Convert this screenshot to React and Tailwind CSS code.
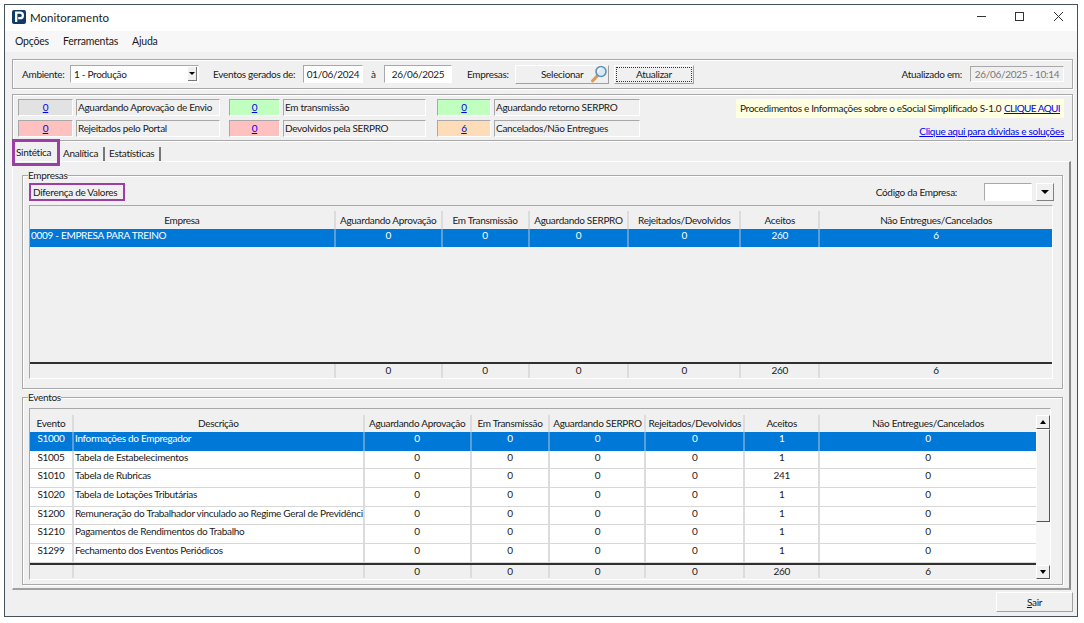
function Inset({ className = "", children }) {
  return (
    <div className={"flex items-center whitespace-nowrap border border-t-[#a8a8a8] border-l-[#a8a8a8] border-r-white border-b-white " + className}>
      {children}
    </div>
  );
}

function Counter({ value, color, boxW, label, labelW, ml }) {
  return (
    <div className={"flex gap-[3px] " + ml}>
      <Inset className={"h-[17px] justify-center " + boxW + " " + color}>
        <a className="text-[#0000ee] underline">{value}</a>
      </Inset>
      <Inset className={"h-[17px] pl-[1px] " + labelW}>{label}</Inset>
    </div>
  );
}

function Lens() {
  return (
    <svg width="18" height="18" viewBox="0 0 18 18" className="block">
      <line x1="8" y1="10" x2="2.5" y2="16" stroke="#d99a5b" strokeWidth="3" strokeLinecap="round" />
      <circle cx="11" cy="6.5" r="5" fill="#d8ecf8" stroke="#5f90b8" strokeWidth="1.6" />
      <path d="M8 6.5a3 3 0 0 1 3-3" fill="none" stroke="#fff" strokeWidth="1.2" />
    </svg>
  );
}

function Row({ cols, cells, selected, h = "h-[18.7px]", footer, leftCols = [] }) {
  return (
    <div
      className={
        "flex shrink-0 " + h + " " +
        (footer
          ? "border-t-2 border-t-[#303030]"
          : selected
            ? "bg-[#0078d7] text-white"
            : "bg-white border-b border-b-[#d8d8d8]")
      }
    >
      {cells.map((c, i) => (
        <div
          key={i}
          className={
            "border-r-2 last:border-r-0 overflow-hidden whitespace-nowrap leading-[12px] " +
            cols[i] + " " +
            (selected ? "border-r-[#5a9fd8] " : "border-r-[#dcdcdc] ") +
            (leftCols.includes(i) ? "text-left pl-[1px]" : "text-center")
          }
        >
          {c}
        </div>
      ))}
    </div>
  );
}

function Header({ cols, cells, h }) {
  return (
    <div className={"flex shrink-0 items-stretch " + h}>
      {cells.map((c, i) => (
        <div key={i} className={"flex items-center justify-center whitespace-nowrap border-r-2 border-r-[#dcdcdc] last:border-r-0 " + cols[i]}>
          {c}
        </div>
      ))}
    </div>
  );
}

function Group({ title, className, children }) {
  return (
    <fieldset className={"border border-[#a8a8a8] shadow-[inset_1px_1px_0_#fff,1px_1px_0_#fff] " + className}>
      <legend className="-ml-[1px] leading-[12px]">{title}</legend>
      {children}
    </fieldset>
  );
}

const empCols = ["w-[306px]", "w-[107px]", "w-[87px]", "w-[100px]", "w-[112px]", "w-[79px]", "w-[232px]"];
const evCols = ["w-[44px]", "w-[291px]", "w-[107px]", "w-[79px]", "w-[96px]", "w-[99px]", "w-[75px]", "w-[216px]"];

const events = [
  ["S1000", "Informações do Empregador", "1"],
  ["S1005", "Tabela de Estabelecimentos", "1"],
  ["S1010", "Tabela de Rubricas", "241"],
  ["S1020", "Tabela de Lotações Tributárias", "1"],
  ["S1200", "Remuneração do Trabalhador vinculado ao Regime Geral de Previdênci", "1"],
  ["S1210", "Pagamentos de Rendimentos do Trabalho", "1"],
  ["S1299", "Fechamento dos Eventos Periódicos", "1"],
];

const input = "bg-white border border-t-[#a8a8a8] border-l-[#a8a8a8] border-r-white border-b-white flex items-center";
const raised = "bg-[#f0f0f0] border border-t-white border-l-white border-r-[#a0a0a0] border-b-[#a0a0a0] flex items-center";
const panel = "border border-[#a8a8a8] shadow-[inset_1px_1px_0_#fff,1px_1px_0_#fff]";

export default function App() {
  return (
    <div className="w-[1084px] h-[623px] bg-white pl-[4px] pt-[4px] overflow-hidden text-[10px] tracking-[-0.3px] leading-[13px] text-[#1a1a1a] font-[Lato,Arial,sans-serif]">
      <div className="w-[1074px] h-[613px] border border-[#44505c] bg-[#f0f0f0] flex flex-col">
        {/* title bar */}
        <div className="h-[26px] bg-white flex items-center pl-[7px] pb-[2px] shrink-0">
          <svg width="14" height="14" viewBox="0 0 14 14">
            <rect width="14" height="14" rx="2" fill="#0f3b66" />
            <path d="M4.2 12V2.6h3.9a2.7 2.7 0 0 1 0 5.6H6.2" fill="none" stroke="#fff" strokeWidth="2.3" />
          </svg>
          <span className="ml-[4px] text-[11.5px] tracking-normal">Monitoramento</span>
          <div className="ml-auto flex items-center">
            <svg width="12" height="12" viewBox="0 0 12 12" className="mr-[26px]"><path d="M1 5.5h9" stroke="#333" /></svg>
            <svg width="12" height="12" viewBox="0 0 12 12" className="mr-[27px]"><rect x="1.5" y="1.5" width="8" height="8" fill="none" stroke="#333" /></svg>
            <svg width="12" height="12" viewBox="0 0 12 12" className="mr-[12px]"><path d="M1 1l9 9M10 1l-9 9" stroke="#333" /></svg>
          </div>
        </div>
        {/* menu */}
        <div className="h-[21px] bg-[#f7f7f7] flex items-center pl-[10px] pb-[1px] gap-[14px] shrink-0 text-[10.5px] tracking-[-0.2px]">
          <span>Opções</span>
          <span>Ferramentas</span>
          <span>Ajuda</span>
        </div>

        <div className="flex-1 pl-[7px] pr-[4px] pt-[7px]">
          {/* filter bar */}
          <div className={"h-[30px] flex items-center pl-[9px] whitespace-nowrap " + panel}>
            <span className="w-[48px]">Ambiente:</span>
            <div className={"w-[129px] h-[18px] pl-[3px] justify-between " + input}>
              <span>1 - Produção</span>
              <span className="w-[9px] h-[14px] mr-[1px] bg-[#f0f0f0] border-r border-b border-[#777] flex items-center justify-center">
                <span className="border-x-[3px] border-x-transparent border-t-[3px] border-t-black" />
              </span>
            </div>
            <span className="ml-[14px] w-[90px]">Eventos gerados de:</span>
            <div className={"w-[60px] h-[18px] justify-center " + input}>01/06/2024</div>
            <span className="ml-[8px] w-[13px]">à</span>
            <div className={"w-[68px] h-[18px] justify-center " + input}>26/06/2025</div>
            <span className="ml-[15px] w-[48px]">Empresas:</span>
            <div className={"w-[94px] h-[19px] " + raised}>
              <span className="ml-[25px]">Selecionar</span>
              <span className="ml-auto"><Lens /></span>
            </div>
            <div className={"ml-[5px] w-[80px] h-[19px] p-[1px] " + raised}>
              <div className="w-full h-full border border-dotted border-[#333] flex items-center justify-center">Atualizar</div>
            </div>
            <span className="ml-auto">Atualizado em:</span>
            <div className="ml-[8px] mr-[8px] w-[94px] h-[16px] border border-t-[#a8a8a8] border-l-[#a8a8a8] border-r-white border-b-white flex items-center justify-center text-[#777]">26/06/2025 - 10:14</div>
          </div>

          {/* status panel */}
          <div className={"mt-[5px] h-[47px] flex pl-[5px] pt-[4px] " + panel}>
            <div className="flex flex-col gap-[4px]">
              <div className="flex">
                <Counter value="0" color="bg-[#e2e2e2]" boxW="w-[55px]" label="Aguardando Aprovação de Envio" labelW="w-[144px]" ml="" />
                <Counter value="0" color="bg-[#c0ffc0]" boxW="w-[51px]" label="Em transmissão" labelW="w-[143px]" ml="ml-[9px]" />
                <Counter value="0" color="bg-[#c0ffc0]" boxW="w-[54px]" label="Aguardando retorno SERPRO" labelW="w-[146px]" ml="ml-[11px]" />
              </div>
              <div className="flex">
                <Counter value="0" color="bg-[#ffc0c0]" boxW="w-[55px]" label="Rejeitados pelo Portal" labelW="w-[144px]" ml="" />
                <Counter value="0" color="bg-[#ffc0c0]" boxW="w-[51px]" label="Devolvidos pela SERPRO" labelW="w-[143px]" ml="ml-[9px]" />
                <Counter value="6" color="bg-[#ffdcb8]" boxW="w-[54px]" label="Cancelados/Não Entregues" labelW="w-[146px]" ml="ml-[11px]" />
              </div>
            </div>
            <div className="ml-auto mr-[8px] flex flex-col items-end whitespace-nowrap">
              <div className="w-[328px] h-[19px] bg-[#ffffe1] flex items-center pl-[4px]">
                <span>Procedimentos e Informações sobre o eSocial Simplificado S-1.0</span>
                <a className="ml-auto mr-[4px] text-[#0000ee] underline tracking-[-0.6px]">CLIQUE AQUI</a>
              </div>
              <a className="mt-[7px] text-[#0000ee] underline">Clique aqui para dúvidas e soluções</a>
            </div>
          </div>

          {/* tabs */}
          <div className="h-[20px] flex items-start">
            <div className="w-[48px] h-[27px] -mt-[2px] border-[3px] border-[#9b3fa6] pl-[1px] pt-[4px] whitespace-nowrap">Sintética</div>
            <span className="ml-[3px] mt-[6px] h-[14px] pr-[5px] border-r-2 border-r-[#777]">Analítica</span>
            <span className="ml-[4px] mt-[6px] h-[14px] pr-[5px] border-r-2 border-r-[#777]">Estatísticas</span>
          </div>

          {/* tab page */}
          <div className="w-[1059px] h-[429px] border-t border-t-white border-r-2 border-r-[#8a8a8a] border-b-2 border-b-[#a0a0a0] border-l border-l-white pl-[9px] pt-[7px]">
            <Group title="Empresas" className="w-[1041px] h-[220px] px-[6px]">
              <div className="flex items-center justify-between h-[18px] mt-[2px]">
                <div className="w-[96px] h-[18px] border-2 border-[#9b3fa6] flex items-center pl-[2px] whitespace-nowrap">Diferença de Valores</div>
                <div className="flex items-center">
                  <span>Código da Empresa:</span>
                  <div className={"ml-[27px] w-[48px] h-[18px] " + input} />
                  <div className="ml-[4px] mr-[2px] w-[18px] h-[18px] bg-[#f0f0f0] border border-t-white border-l-white border-r-[#808080] border-b-[#808080] flex items-center justify-center">
                    <span className="border-x-[4px] border-x-transparent border-t-[4px] border-t-black" />
                  </div>
                </div>
              </div>
              <div className="w-[1024px] h-[174px] mt-[4px] border border-t-[#a8a8a8] border-l-[#a8a8a8] border-r-white border-b-white pt-[5px] flex flex-col">
                <Header h="h-[18px]" cols={empCols} cells={["Empresa", "Aguardando Aprovação", "Em Transmissão", "Aguardando SERPRO", "Rejeitados/Devolvidos", "Aceitos", "Não Entregues/Cancelados"]} />
                <Row cols={empCols} selected h="h-[18px]" leftCols={[0]} cells={["0009 - EMPRESA PARA TREINO", "0", "0", "0", "0", "260", "6"]} />
                <div className="flex-1" />
                <Row cols={empCols} footer h="h-[16px]" cells={["", "0", "0", "0", "0", "260", "6"]} />
              </div>
            </Group>
            <Group title="Eventos" className="w-[1041px] h-[194px] mt-[2px] px-[6px]">
              <div className="w-[1022px] h-[172px] mt-[5px] border border-t-[#a8a8a8] border-l-[#a8a8a8] border-r-white border-b-white pt-[6px] flex">
                <div className="w-[1006px] flex flex-col">
                  <Header h="h-[17px]" cols={evCols} cells={["Evento", "Descrição", "Aguardando Aprovação", "Em Transmissão", "Aguardando SERPRO", "Rejeitados/Devolvidos", "Aceitos", "Não Entregues/Cancelados"]} />
                  {events.map((e, i) => (
                    <Row key={e[0]} cols={evCols} leftCols={[1]} selected={i === 0} cells={[e[0], e[1], "0", "0", "0", "0", e[2], "0"]} />
                  ))}
                  <Row cols={evCols} footer h="h-[15px]" cells={["", "", "0", "0", "0", "0", "260", "6"]} />
                </div>
                <div className="w-[14px] flex flex-col bg-[#f6f6f6]">
                  <div className="h-[14px] bg-[#f0f0f0] border border-r-[#555] border-b-[#555] border-t-white border-l-white flex items-center justify-center">
                    <span className="border-x-[3px] border-x-transparent border-b-[4px] border-b-black" />
                  </div>
                  <div className="h-[93px] bg-[#f0f0f0] border border-r-[#555] border-b-[#555] border-t-white border-l-white" />
                  <div className="flex-1" />
                  <div className="h-[14px] bg-[#f0f0f0] border border-r-[#555] border-b-[#555] border-t-white border-l-white flex items-center justify-center">
                    <span className="border-x-[3px] border-x-transparent border-t-[4px] border-t-black" />
                  </div>
                </div>
              </div>
            </Group>
          </div>

          {/* footer */}
          <div className="flex justify-end mt-[2px]">
            <div className={"w-[77px] h-[20px] justify-center " + raised}>
              <span><span className="underline">S</span>air</span>
            </div>
          </div>
        </div>
      </div>
    </div>
  );
}
